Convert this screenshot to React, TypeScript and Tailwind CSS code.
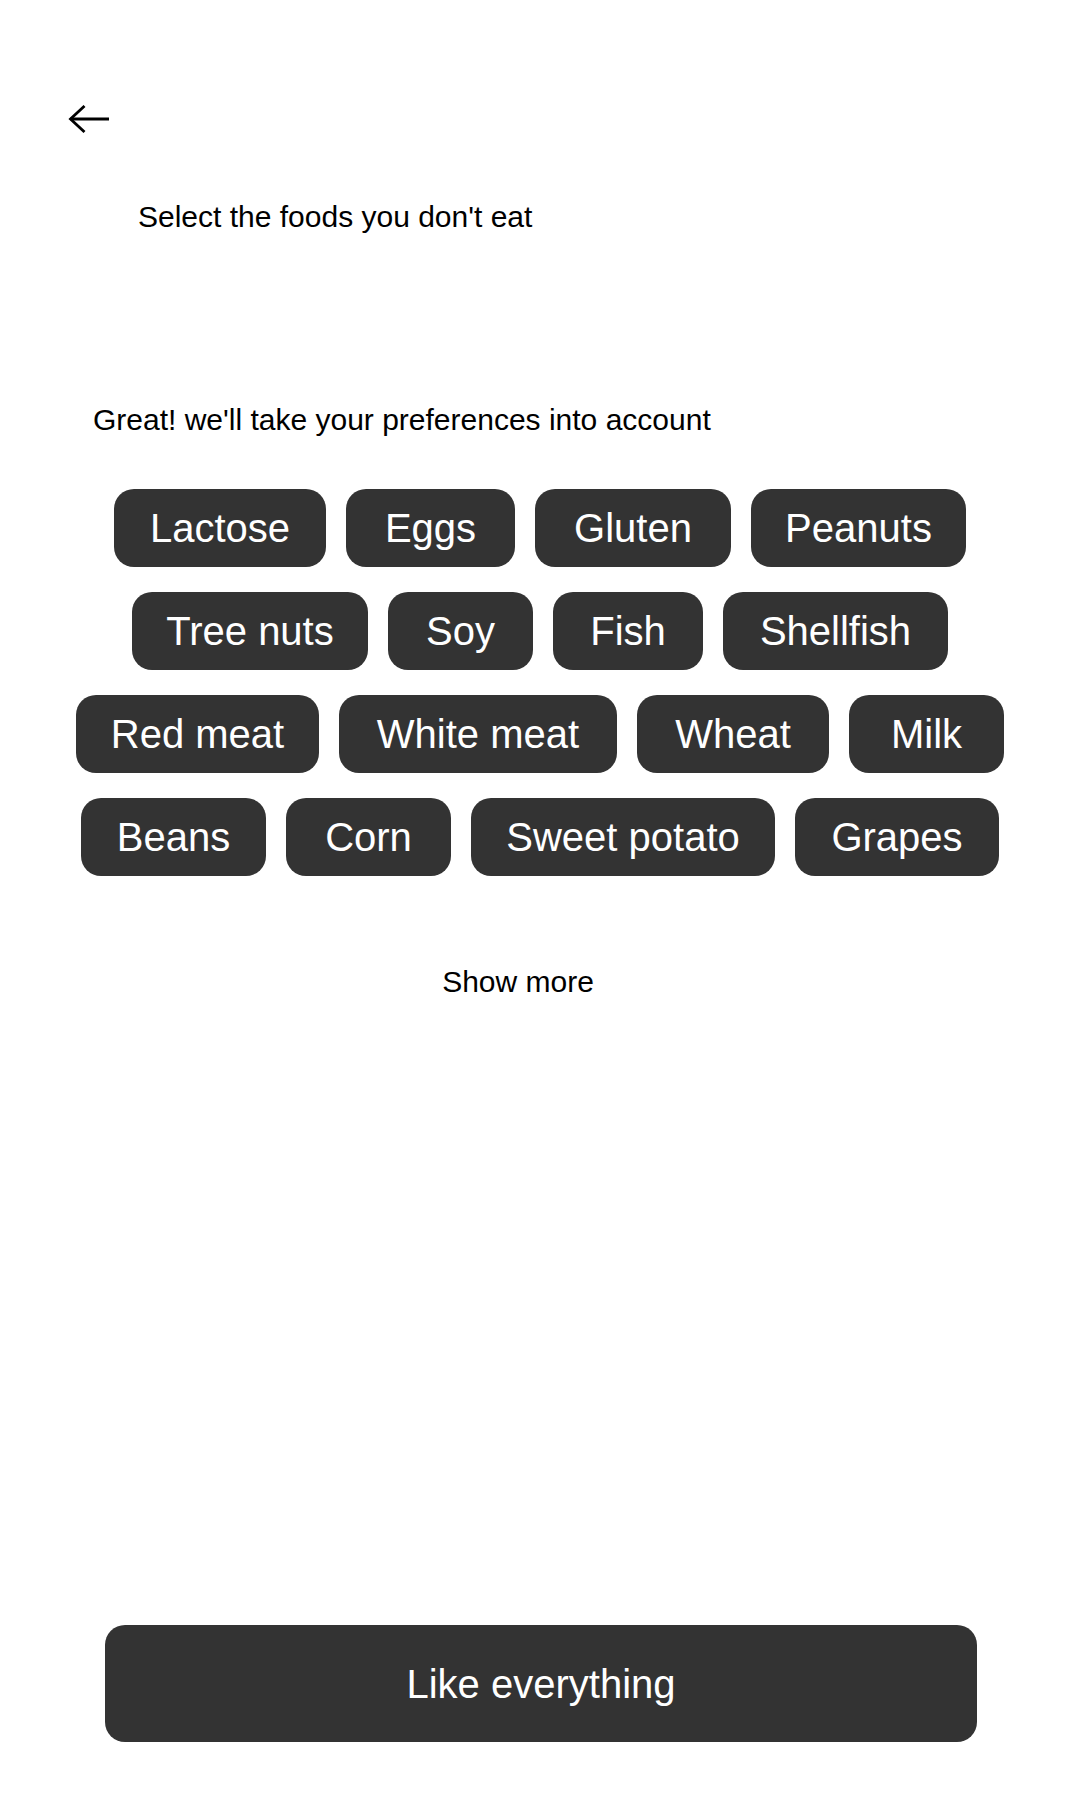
const foods: { label: string; width: string }[] = [
  { label: "Lactose", width: "w-[212px]" },
  { label: "Eggs", width: "w-[169px]" },
  { label: "Gluten", width: "w-[196px]" },
  { label: "Peanuts", width: "w-[215px]" },
  { label: "Tree nuts", width: "w-[236px]" },
  { label: "Soy", width: "w-[145px]" },
  { label: "Fish", width: "w-[150px]" },
  { label: "Shellfish", width: "w-[225px]" },
  { label: "Red meat", width: "w-[243px]" },
  { label: "White meat", width: "w-[278px]" },
  { label: "Wheat", width: "w-[192px]" },
  { label: "Milk", width: "w-[155px]" },
  { label: "Beans", width: "w-[185px]" },
  { label: "Corn", width: "w-[165px]" },
  { label: "Sweet potato", width: "w-[304px]" },
  { label: "Grapes", width: "w-[204px]" },
];

function BackArrow() {
  return (
    <svg viewBox="0 0 41 28" className="h-[28px] w-[41px]" fill="none" stroke="currentColor" strokeWidth="2.8">
      <path d="M41 14H2.5" />
      <path d="M16.5 1L2.5 14L16.5 27" />
    </svg>
  );
}

function FoodPill({ label, width }: { label: string; width: string }) {
  return (
    <button
      className={`flex h-[78px] ${width} items-center justify-center rounded-[20px] bg-[#333333] text-[40px] leading-[46px] text-white`}
    >
      {label}
    </button>
  );
}

export default function App() {
  return (
    <div className="min-h-[1800px] w-[1080px] bg-white font-['Liberation_Sans',Arial,sans-serif] text-black">
      {/* Header */}
      <div className="pl-[68px] pt-[105px] text-black">
        <BackArrow />
      </div>
      <h1 className="mt-[67px] pl-[138px] text-[30px] font-normal leading-[34px]">Select the foods you don't eat</h1>

      <p className="mt-[169px] pl-[93px] text-[30px] leading-[34px]">Great! we'll take your preferences into account</p>

      {/* Food chips */}
      <div className="mt-[52px] flex flex-wrap justify-center gap-x-[20px] gap-y-[25px] px-[60px]">
        {foods.map((f) => (
          <FoodPill key={f.label} label={f.label} width={f.width} />
        ))}
      </div>

      <div className="mt-[89px] flex justify-center pr-[44px]">
        <button className="text-[30px] leading-[34px] text-black">Show more</button>
      </div>

      <button className="ml-[105px] mt-[626px] flex h-[117px] w-[872px] items-center justify-center rounded-[20px] bg-[#333333] text-[40px] text-white">
        Like everything
      </button>
    </div>
  );
}
